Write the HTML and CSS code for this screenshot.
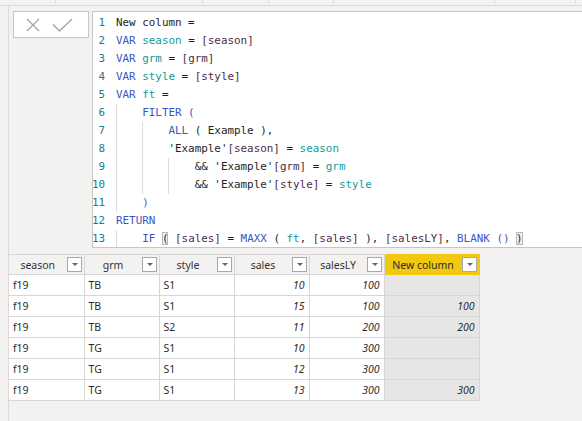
FILE: index.html
```html
<!DOCTYPE html>
<html>
<head>
<meta charset="utf-8">
<link rel="stylesheet" href="styles.css">
</head>
<body>
<div class="topstrip">
  <span class="seg s1"></span><span class="seg s2"></span><span class="seg s3"></span><span class="seg s4"></span><span class="seg s5"></span><span class="seg s6"></span>
</div>
<div class="main">
  <div class="leftpanel"></div>
  <div class="content">
    <div class="formula">
      <div class="actions">
        <svg width="14" height="14" viewBox="0 0 14 14" class="ico"><path d="M1 1 L13 13 M13 1 L1 13" stroke="#a3a3a3" stroke-width="1.3" fill="none"/></svg>
        <svg width="21" height="14" viewBox="0 0 21 14" class="ico"><path d="M1 6.5 L7.5 13 L20 1" stroke="#a3a3a3" stroke-width="1.3" fill="none"/></svg>
      </div>
      <div class="editor">
        <div class="ln"><span class="num">1</span><span class="code"><span class="t">New column =</span></span></div>
        <div class="ln"><span class="num">2</span><span class="code"><span class="k">VAR</span> <span class="v">season</span> = <span class="c">[season]</span></span></div>
        <div class="ln"><span class="num">3</span><span class="code"><span class="k">VAR</span> <span class="v">grm</span> = <span class="c">[grm]</span></span></div>
        <div class="ln"><span class="num">4</span><span class="code"><span class="k">VAR</span> <span class="v">style</span> = <span class="c">[style]</span></span></div>
        <div class="ln"><span class="num">5</span><span class="code"><span class="k">VAR</span> <span class="v">ft</span> =</span></div>
        <div class="ln"><span class="num">6</span><span class="code"><span class="ind"></span><span class="k">FILTER (</span></span></div>
        <div class="ln"><span class="num">7</span><span class="code"><span class="ind"></span><span class="ind"></span><span class="k">ALL</span> ( Example ),</span></div>
        <div class="ln"><span class="num">8</span><span class="code"><span class="ind"></span><span class="ind"></span>'Example'<span class="c">[season]</span> = <span class="v">season</span></span></div>
        <div class="ln"><span class="num">9</span><span class="code"><span class="ind"></span><span class="ind"></span><span class="ind"></span>&amp;&amp; 'Example'<span class="c">[grm]</span> = <span class="v">grm</span></span></div>
        <div class="ln"><span class="num">10</span><span class="code"><span class="ind"></span><span class="ind"></span><span class="ind"></span>&amp;&amp; 'Example'<span class="c">[style]</span> = <span class="v">style</span></span></div>
        <div class="ln"><span class="num">11</span><span class="code"><span class="ind"></span><span class="k">)</span></span></div>
        <div class="ln"><span class="num">12</span><span class="code"><span class="k">RETURN</span></span></div>
        <div class="ln"><span class="num">13</span><span class="code"><span class="ind"></span><span class="k">IF</span> <span class="match">(</span> <span class="c">[sales]</span> = <span class="k">MAXX</span> ( <span class="v">ft</span>, <span class="c">[sales]</span> ), <span class="c">[salesLY]</span>, <span class="k">BLANK ()</span> <span class="match">)</span></span></div>
      </div>
    </div>
    <table class="grid">
      <thead>
        <tr>
          <th><div class="hd"><span class="hl">season</span><span class="dd"></span></div></th>
          <th><div class="hd"><span class="hl">grm</span><span class="dd"></span></div></th>
          <th><div class="hd"><span class="hl">style</span><span class="dd"></span></div></th>
          <th><div class="hd"><span class="hl">sales</span><span class="dd"></span></div></th>
          <th><div class="hd"><span class="hl">salesLY</span><span class="dd"></span></div></th>
          <th class="sel"><div class="hd"><span class="hl">New column</span><span class="dd"></span></div></th>
        </tr>
      </thead>
      <tbody>
        <tr><td>f19</td><td>TB</td><td>S1</td><td class="n">10</td><td class="n">100</td><td class="n nc"></td></tr>
        <tr><td>f19</td><td>TB</td><td>S1</td><td class="n">15</td><td class="n">100</td><td class="n nc">100</td></tr>
        <tr><td>f19</td><td>TB</td><td>S2</td><td class="n">11</td><td class="n">200</td><td class="n nc">200</td></tr>
        <tr><td>f19</td><td>TG</td><td>S1</td><td class="n">10</td><td class="n">300</td><td class="n nc"></td></tr>
        <tr><td>f19</td><td>TG</td><td>S1</td><td class="n">12</td><td class="n">300</td><td class="n nc"></td></tr>
        <tr><td>f19</td><td>TG</td><td>S1</td><td class="n">13</td><td class="n">300</td><td class="n nc">300</td></tr>
      </tbody>
    </table>
  </div>
</div>
</body>
</html>
```

FILE: styles.css
```css
html, body {
  margin: 0;
  padding: 0;
}
body {
  width: 582px;
  height: 421px;
  overflow: hidden;
  background: #f3f2f1;
  font-family: "Noto Sans", "Open Sans", sans-serif;
}
.topstrip {
  height: 5px;
  border-bottom: 1px solid #dcdad8;
  display: flex;
}
.seg {
  height: 3px;
  border-right: 1px solid #d6d6d6;
}
.s1 { width: 55px; }
.s2 { width: 146px; }
.s3 { width: 65px; }
.s4 { width: 64px; }
.s5 { width: 160px; }
.s6 { width: 80px; }
.main {
  display: flex;
  height: 415px;
}
.leftpanel {
  width: 8px;
  border-right: 1px solid #dcdad8;
  flex: none;
}
.content {
  flex: 1;
  min-width: 0;
  padding-top: 5px;
}
.formula {
  display: flex;
  gap: 3px;
  padding-left: 4px;
}
.actions {
  width: 76px;
  height: 27px;
  box-sizing: border-box;
  background: #fff;
  border: 1px solid #c8c6c4;
  display: flex;
  align-items: center;
  gap: 12px;
  padding-left: 12px;
  flex: none;
}
.actions .ico { display: block; }
.editor {
  flex: 1;
  background: #fff;
  border: 1px solid #c8c6c4;
  border-right: none;
  padding-top: 2px;
  height: 233px;
  overflow: hidden;
  font-family: "DejaVu Sans Mono", "Liberation Mono", monospace;
  font-size: 10.9px;
  color: #1e1e1e;
}
.ln {
  display: flex;
  height: 18px;
  line-height: 18px;
}
.num {
  width: 13px;
  text-align: right;
  color: #237893;
  flex: none;
  margin-left: -1px;
}
.code {
  margin-left: 11px;
  white-space: pre;
}
.ind {
  display: inline-block;
  width: 4ch;
  height: 18px;
  vertical-align: top;
  box-shadow: inset 1px 0 0 #dcdcdc;
}
.k { color: #3a56c2; }
.v { color: #14999d; }
.c { color: #4d2b45; }
.t { color: #1e1e1e; }
.match {
  outline: 1px solid #b9b9b9;
  outline-offset: -1px;
  background: #f0f0ee;
}
.grid {
  margin-top: 6px;
  border-collapse: collapse;
  table-layout: fixed;
  width: 470px;
  font-size: 10.5px;
  color: #2b2b2b;
}
.grid th, .grid td {
  height: 20px;
  padding: 0;
  border: 1px solid #d6d6d6;
  box-sizing: border-box;
}
.grid th:first-child, .grid td:first-child { border-left: none; }
.grid th { width: 75px; background: #f3f2f1; font-weight: normal; color: #333; }
.grid th.sel { width: 95px; background: #f2c811; border-color: #f2c811; color: #2b2b2b; }
.hd {
  display: flex;
  align-items: center;
  padding-right: 2px;
}
.hl {
  flex: 1;
  text-align: center;
  white-space: nowrap;
}
.dd {
  width: 13px;
  height: 13px;
  background: #fff;
  border: 1px solid #a8a8a8;
  position: relative;
  flex: none;
}
.dd::after {
  content: "";
  position: absolute;
  left: 4px;
  top: 5px;
  border-left: 3px solid transparent;
  border-right: 3px solid transparent;
  border-top: 3px solid #666;
}
.grid td {
  background: #fff;
  padding: 0 4px;
  height: 21px;
}
.grid td.n {
  text-align: right;
  font-style: italic;
}
.grid td.nc {
  background: #e6e6e6;
}
```
